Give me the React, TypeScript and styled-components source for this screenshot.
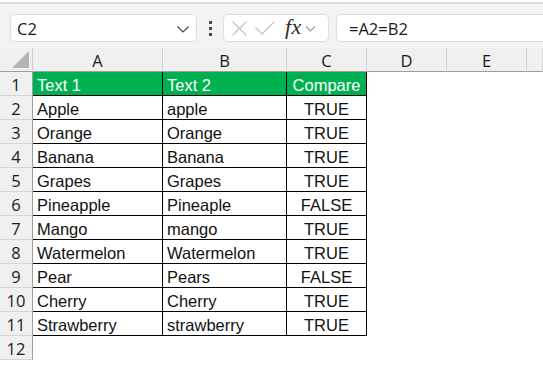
import React from "react";
import styled, { createGlobalStyle } from "styled-components";

const GlobalStyle = createGlobalStyle`
  html, body {
    margin: 0;
    padding: 0;
    background: #ffffff;
    overflow: hidden;
  }
  body {
    font-family: "Liberation Sans", Arial, sans-serif;
    color: #1f1f1f;
  }
`;

type Row = { a: string; b: string; c: string };

const rows: Row[] = [
  { a: "Text 1", b: "Text 2", c: "Compare" },
  { a: "Apple", b: "apple", c: "TRUE" },
  { a: "Orange", b: "Orange", c: "TRUE" },
  { a: "Banana", b: "Banana", c: "TRUE" },
  { a: "Grapes", b: "Grapes", c: "TRUE" },
  { a: "Pineapple", b: "Pineaple", c: "FALSE" },
  { a: "Mango", b: "mango", c: "TRUE" },
  { a: "Watermelon", b: "Watermelon", c: "TRUE" },
  { a: "Pear", b: "Pears", c: "FALSE" },
  { a: "Cherry", b: "Cherry", c: "TRUE" },
  { a: "Strawberry", b: "strawberry", c: "TRUE" },
];

const columns = ["A", "B", "C", "D", "E", ""];

const App = () => {
  return (
    <Page>
      <GlobalStyle />
      <TopEdge />
      <FormulaBar>
        <NameBox>
          <span>C2</span>
          <Chevron width="14" height="14" viewBox="0 0 14 14">
            <path d="M1.5 4.5 L7 10 L12.5 4.5" fill="none" stroke="#444" strokeWidth="1.2" />
          </Chevron>
        </NameBox>
        <Dots>
          <i />
          <i />
          <i />
        </Dots>
        <FxBox>
          <svg width="17" height="17" viewBox="0 0 17 17">
            <path d="M1.5 1.5 L15.5 15.5 M15.5 1.5 L1.5 15.5" stroke="#c4c4c4" strokeWidth="1.3" />
          </svg>
          <svg width="22" height="16" viewBox="0 0 22 16">
            <path d="M1.5 7.5 L8 14 L20.5 1.5" fill="none" stroke="#c4c4c4" strokeWidth="1.3" />
          </svg>
          <Fx>fx</Fx>
          <svg width="11" height="11" viewBox="0 0 11 11">
            <path d="M1 3.5 L5.5 8 L10 3.5" fill="none" stroke="#9a9a9a" strokeWidth="1.1" />
          </svg>
        </FxBox>
        <FormulaInput>=A2=B2</FormulaInput>
      </FormulaBar>

      <Grid>
        <Corner>
          <svg width="17" height="17" viewBox="0 0 17 17">
            <polygon points="17,0 17,17 0,17" fill="#b5b5b5" />
          </svg>
        </Corner>
        {columns.map((c, i) => (
          <ColHead key={i}>{c}</ColHead>
        ))}

        {Array.from({ length: 12 }).map((_, r) => {
          const row = rows[r];
          return (
            <React.Fragment key={r}>
              <RowHead>{r + 1}</RowHead>
              {row ? (
                <>
                  <DataCell $head={r === 0}>{row.a}</DataCell>
                  <DataCell $head={r === 0}>{row.b}</DataCell>
                  <DataCell $head={r === 0} $center>
                    {row.c}
                  </DataCell>
                </>
              ) : (
                <>
                  <EmptyCell />
                  <EmptyCell />
                  <EmptyCell />
                </>
              )}
              <EmptyCell />
              <EmptyCell />
              <EmptyCell />
            </React.Fragment>
          );
        })}
      </Grid>
    </Page>
  );
};

export default App;

const Page = styled.div`
  width: 543px;
  height: 367px;
  overflow: hidden;
  background: #ffffff;
`;

const TopEdge = styled.div`
  height: 2px;
  background: #ffffff;
  border-bottom: 2px solid #dcdcdc;
`;

const FormulaBar = styled.div`
  height: 44px;
  box-sizing: border-box;
  background: #f3f3f3;
  display: flex;
  align-items: center;
  padding: 4px 0 0 10px;
  white-space: nowrap;
`;

const NameBox = styled.div`
  width: 187px;
  height: 28px;
  box-sizing: border-box;
  background: #ffffff;
  border: 1px solid #dedede;
  border-radius: 5px;
  display: flex;
  align-items: center;
  justify-content: space-between;
  padding: 0 6px 0 6px;
  font-family: "Open Sans", "Liberation Sans", sans-serif;
  font-size: 16.5px;
  color: #1a1a1a;
`;

const Chevron = styled.svg`
  margin-top: 1px;
`;

const Dots = styled.div`
  width: 26px;
  display: flex;
  flex-direction: column;
  align-items: center;
  gap: 3px;

  i {
    display: block;
    width: 3px;
    height: 3px;
    background: #4a4a4a;
  }
`;

const FxBox = styled.div`
  width: 106px;
  height: 28px;
  box-sizing: border-box;
  background: #ffffff;
  border: 1px solid #dedede;
  border-radius: 5px;
  display: flex;
  align-items: center;
  padding: 0 0 0 7px;
  gap: 6px;
`;

const Fx = styled.span`
  font-family: "Liberation Serif", "Times New Roman", serif;
  font-style: italic;
  font-size: 22px;
  color: #2a2a2a;
  margin-left: 3px;
  margin-right: -3px;
  margin-top: -2px;
  letter-spacing: 0.5px;
`;

const FormulaInput = styled.div`
  margin-left: 7px;
  flex: 1;
  height: 28px;
  box-sizing: border-box;
  background: #ffffff;
  border: 1px solid #dedede;
  border-right: none;
  border-radius: 5px 0 0 5px;
  display: flex;
  align-items: center;
  padding-left: 12px;
  font-family: "Open Sans", "Liberation Sans", sans-serif;
  font-size: 16.5px;
  color: #1a1a1a;
`;

const Grid = styled.div`
  display: grid;
  grid-template-columns: 33px 130px 124px 80px 80px 80px 1fr;
  grid-template-rows: 24px repeat(12, 24px);
  background: #ffffff;
`;

const Corner = styled.div`
  background: #f0f0f0;
  border-bottom: 1px solid #9e9e9e;
  border-right: 1px solid #cfcfcf;
  box-sizing: border-box;
  display: flex;
  align-items: flex-end;
  justify-content: flex-end;
  padding: 0 3px 3px 0;
`;

const ColHead = styled.div`
  background: #f0f0f0;
  box-sizing: border-box;
  border-bottom: 1px solid #9e9e9e;
  border-right: 1px solid #d2d2d2;
  display: flex;
  align-items: center;
  justify-content: center;
  padding-top: 1px;
  font-family: "Open Sans", "Liberation Sans", sans-serif;
  font-size: 16.5px;
  color: #1a1a1a;
`;

const RowHead = styled.div`
  background: #f0f0f0;
  box-sizing: border-box;
  border-right: 1px solid #9e9e9e;
  border-bottom: 1px solid #d6d6d6;
  display: flex;
  align-items: center;
  justify-content: center;
  padding-top: 2px;
  font-family: "Open Sans", "Liberation Sans", sans-serif;
  font-size: 16.5px;
  color: #1a1a1a;
`;

const DataCell = styled.div<{ $head?: boolean; $center?: boolean }>`
  box-sizing: border-box;
  border-right: 1px solid #000000;
  border-bottom: 1px solid #000000;
  background: ${(p) => (p.$head ? "#00b050" : "#ffffff")};
  color: ${(p) => (p.$head ? "#ffffff" : "#111111")};
  display: flex;
  align-items: center;
  justify-content: ${(p) => (p.$center ? "center" : "flex-start")};
  padding: 3px 4px 0;
  font-family: "Liberation Sans", Arial, sans-serif;
  font-size: 16.5px;
  white-space: nowrap;
  overflow: hidden;
`;

const EmptyCell = styled.div`
  background: #ffffff;
`;
